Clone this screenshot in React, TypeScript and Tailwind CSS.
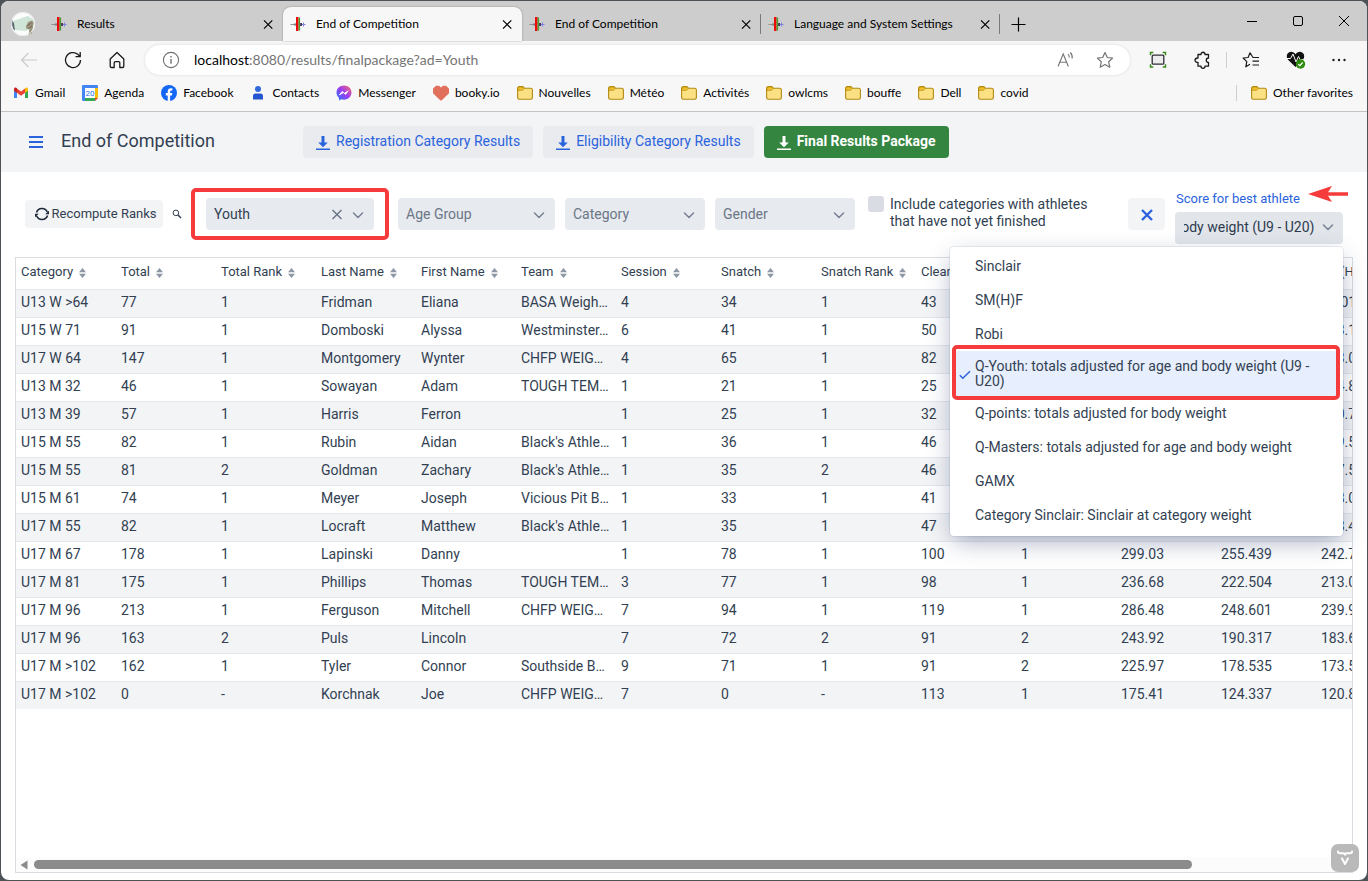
import { useLayoutEffect, useRef, type ReactNode } from 'react';

function BarbellIcon() {
  return (
    <svg viewBox="0 0 16 16" className="h-4 w-4 shrink-0" aria-hidden="true">
      <path d="M.5 8.500H6" stroke="#8d8d8d" strokeWidth="1" />
      <path d="M5 7v3" stroke="#777" strokeWidth="1" />
      <rect x="6" y="1" width="2.500" height="14" fill="#f00808" />
      <rect x="8.500" y="1.500" width="1.600" height="13" fill="#4d9a35" />
      <rect x="10.100" y="7" width="1.900" height="3" fill="#3f3a56" />
      <path d="M12 8.500h3.500M13.500 6.500v4" stroke="#8080e0" strokeWidth="1" />
    </svg>
  );
}

function CloseIcon({ className }: { className: string }) {
  return (
    <svg viewBox="0 0 16 16" className={className} fill="none" stroke="currentColor" aria-hidden="true">
      <path d="M4 4.300l8.300 8.300M12.300 4.300L4 12.600" strokeWidth="1.200" />
    </svg>
  );
}

function Tab({ title, active, divider }: { title: string; active?: boolean; divider?: boolean }) {
  return (
    <div
      className={
        active
          ? 'flex h-[34px] w-[239px] items-center gap-[10px] rounded-t-lg bg-[#f7f7f7] px-[7px] shadow-[0_0_2px_rgba(0,0,0,0.35)]'
          : divider
            ? 'flex h-[34px] w-[239px] items-center gap-[10px] bg-[linear-gradient(#7a7a7a,#7a7a7a)] bg-[length:1px_20px] bg-[position:right_center] bg-no-repeat px-[7px]'
            : 'flex h-[34px] w-[239px] items-center gap-[10px] px-[7px]'
      }
    >
      <BarbellIcon />
      <span className="flex-1 truncate">{title}</span>
      <button type="button" aria-label={'Close ' + title} className="h-4 w-4">
        <CloseIcon className="h-4 w-4" />
      </button>
    </div>
  );
}

function FolderIcon() {
  return (
    <svg viewBox="0 0 16 16" className="h-4 w-4 shrink-0" aria-hidden="true">
      <path d="M.6 3.2a1.6 1.6 0 0 1 1.6-1.6h3.2c.8 0 1 .3 1.4.8l.7.9h6.300a1.600 1.600 0 0 1 1.600 1.600v7.700a1.700 1.700 0 0 1-1.700 1.700H2.300A1.700 1.700 0 0 1 .6 12.600z" fill="#fbe084" stroke="#b28a10" strokeWidth="1.1" />
      <path d="M1 3.200C1 2.400 1.600 2 2.300 2h3c.6 0 .8.2 1.200.7l.6.8-1 1.300c-.3.4-.6.500-1.100.500H1z" fill="#efc02c" stroke="#b28a10" strokeWidth=".7" />
    </svg>
  );
}

function GmailIcon() {
  return (
    <svg viewBox="0 0 16 16" className="h-4 w-4 shrink-0" aria-hidden="true">
      <path d="M1 4.500v8.500h3V7.500z" fill="#4285f4" />
      <path d="M15 4.500v8.500h-3V7.500z" fill="#34a853" />
      <path d="M4 3.400v4.300l4 3 4-3V3.400l-4 3z" fill="#ea4335" />
      <path d="M1 4.200v1.500l3 2.200V3.200C2.500 2 1 2.800 1 4.200z" fill="#c5221f" />
      <path d="M15 4.200v1.500l-3 2.200V3.200c1.500-1.200 3-.4 3 1z" fill="#fbbc04" />
    </svg>
  );
}

function AgendaIcon() {
  return (
    <svg viewBox="0 0 16 16" className="h-4 w-4 shrink-0" aria-hidden="true">
      <path d="M0 1.200C0 .5.5 0 1.200 0h13.600c.7 0 1.200.5 1.200 1.200V12l-4 4H1.200C.5 16 0 15.500 0 14.800z" fill="#4285f4" />
      <rect x="13" y="3" width="3" height="10" fill="#fbbc04" />
      <rect x="3" y="13" width="10" height="3" fill="#34a853" />
      <path d="M13 13h3l-3 3z" fill="#ea4335" />
      <rect x="3" y="3" width="10" height="10" fill="#fff" />
      <text x="8" y="10.800" fontSize="8" textAnchor="middle" fill="#1a73e8" fontFamily="Roboto, sans-serif">20</text>
    </svg>
  );
}

function FacebookIcon() {
  return (
    <svg viewBox="0 0 16 16" className="h-4 w-4 shrink-0" aria-hidden="true">
      <circle cx="8" cy="8" r="8" fill="#1466f4" />
      <path d="M6.700 16v-5.500H4.800V8h1.900V6.800c0-2.500 1.200-3.600 3.400-3.600.4 0 1 .1 1.300.2v2.100h-.8c-1.100 0-1.500.5-1.500 1.500v1h2.200l-.4 2.500H9.100V16z" fill="#fff" />
    </svg>
  );
}

function ContactsIcon() {
  return (
    <svg viewBox="0 0 16 16" className="h-4 w-4 shrink-0" aria-hidden="true">
      <circle cx="8" cy="4" r="3" fill="#2f67dc" />
      <path d="M3 14.500V11a2.500 2.500 0 0 1 2.500-2.500h5A2.500 2.500 0 0 1 13 11v3.500z" fill="#2456cf" />
    </svg>
  );
}

function MessengerIcon() {
  return (
    <svg viewBox="0 0 16 16" className="h-4 w-4 shrink-0" aria-hidden="true">
      <defs>
        <linearGradient id="messenger" x1="0" y1="1" x2="1" y2="0">
          <stop offset="0" stopColor="#1c7bff" />
          <stop offset=".5" stopColor="#9a3cf6" />
          <stop offset="1" stopColor="#ff6a66" />
        </linearGradient>
      </defs>
      <path d="M8 .5C3.700.5.5 3.600.5 7.600c0 2.200.9 4.100 2.500 5.400v2.500l2.300-1.200c.9.2 1.700.4 2.700.4 4.300 0 7.500-3.100 7.500-7.100S12.300.5 8 .5z" fill="url(#messenger)" />
      <path d="M3.500 9.900l2.700-3.500 2.200 1.900 3.800-2.500-2.600 3.600-2.300-1.800z" fill="#fff" stroke="#fff" strokeWidth=".8" strokeLinejoin="round" />
    </svg>
  );
}

function HeartIcon() {
  return (
    <svg viewBox="0 0 16 16" className="h-4 w-4 shrink-0" aria-hidden="true">
      <path d="M0 3.500L3 .8h3l2 1.700 2-1.700h3l3 2.700v4.800L8.500 15.500h-1L0 8.300z" fill="#e0705c" />
    </svg>
  );
}

const bookmarks: { label: string; icon: ReactNode }[] = [
  { label: 'Gmail', icon: <GmailIcon /> },
  { label: 'Agenda', icon: <AgendaIcon /> },
  { label: 'Facebook', icon: <FacebookIcon /> },
  { label: 'Contacts', icon: <ContactsIcon /> },
  { label: 'Messenger', icon: <MessengerIcon /> },
  { label: 'booky.io', icon: <HeartIcon /> },
  { label: 'Nouvelles', icon: <FolderIcon /> },
  { label: 'Météo', icon: <FolderIcon /> },
  { label: 'Activités', icon: <FolderIcon /> },
  { label: 'owlcms', icon: <FolderIcon /> },
  { label: 'bouffe', icon: <FolderIcon /> },
  { label: 'Dell', icon: <FolderIcon /> },
  { label: 'covid', icon: <FolderIcon /> },
];

function BrowserChrome() {
  return (
    <div className="font-['Lato','Noto_Sans',sans-serif] text-xs text-black">
      <div className="flex h-10 items-end bg-[#cdcdcd]">
        <svg viewBox="0 0 24 24" className="mr-[9px] mb-[5px] ml-[10px] h-6 w-6" aria-hidden="true">
          <circle cx="12" cy="12" r="12" fill="#fbfdfc" />
          <path d="M2 9l15-5 6 4-1 8-7 3-11-1z" fill="#cfe5d8" />
          <path d="M1 7.500l2 4 1 7-1.500-1L0 12z" fill="#5b6570" />
          <path d="M17 10l4-1.500 1.800 2L21 21l-3.500 2 1-6.500-3 .5-.5-2z" fill="#9b937b" />
          <path d="M15.500 14l5-3M17 17l4-3" stroke="#5e5646" strokeWidth=".7" />
          <circle cx="12" cy="12" r="11.500" fill="none" stroke="#e8ecea" />
        </svg>
        <div className="flex">
          <Tab title="Results" />
          <Tab title="End of Competition" active />
          <Tab title="End of Competition" divider />
          <Tab title="Language and System Settings" divider />
        </div>
        <button type="button" aria-label="New tab" className="ml-[10px] flex h-[34px] w-4 items-center">
          <svg viewBox="0 0 16 16" className="h-4 w-4" stroke="currentColor" strokeWidth="1.200">
            <path d="M8.500 1.500v14M1.500 8.500h14" />
          </svg>
        </button>
        <div className="ml-auto flex h-10 self-start">
          <button type="button" aria-label="Minimize" className="flex w-[46px] items-center justify-center">
            <svg viewBox="0 0 12 12" className="h-3 w-3" stroke="currentColor"><path d="M1 6.500h10" /></svg>
          </button>
          <button type="button" aria-label="Maximize" className="flex w-[46px] items-center justify-center">
            <svg viewBox="0 0 12 12" className="h-3 w-3" fill="none" stroke="currentColor"><rect x="1.500" y="1.500" width="9" height="9" rx="1.500" /></svg>
          </button>
          <button type="button" aria-label="Close window" className="flex w-[46px] items-center justify-center">
            <svg viewBox="0 0 12 12" className="h-3 w-3" stroke="currentColor"><path d="M1 1l10 10M11 1L1 11" /></svg>
          </button>
        </div>
      </div>

      <div className="border-b border-[#c3c3c3] bg-[#f7f7f7] pt-1">
        <div className="flex h-[30px] items-center pl-[6px]">
          <button type="button" aria-label="Back" className="flex w-11 justify-center text-[#c9c9c9]">
            <svg viewBox="0 0 18 18" className="h-[18px] w-[18px]" fill="none" stroke="currentColor" strokeWidth="1.100">
              <path d="M17 9H1.500M8.500 2L1.500 9l7 7" />
            </svg>
          </button>
          <button type="button" aria-label="Refresh" className="flex w-11 justify-center text-[#1b1b1b]">
            <svg viewBox="0 0 18 18" className="h-[18px] w-[18px]" fill="none" stroke="currentColor" strokeWidth="1.300">
              <path d="M16.500 9A7.500 7.500 0 1 1 13.800 3.300L16 5.500M16.200 1v4.700h-4.700" />
            </svg>
          </button>
          <button type="button" aria-label="Home" className="flex w-11 justify-center text-[#1b1b1b]">
            <svg viewBox="0 0 18 18" className="h-[18px] w-[18px]" fill="none" stroke="currentColor" strokeWidth="1.300" strokeLinejoin="round">
              <path d="M2.200 8L9 1.500 15.800 8v7.300c0 .7-.5 1.200-1.200 1.200h-2.800v-4.700c0-.7-.5-1.200-1.200-1.200H7.400c-.7 0-1.200.5-1.200 1.200v4.700H3.400c-.7 0-1.200-.5-1.200-1.200z" />
            </svg>
          </button>
          <div className="ml-[6px] flex h-[30px] flex-1 items-center rounded-full bg-white pr-4 pl-[17px] shadow-[0_0_3px_rgba(0,0,0,0.12)]">
            <svg viewBox="0 0 18 18" className="h-[18px] w-[18px]" fill="none" stroke="#6f6f6f" strokeWidth="1.100" aria-hidden="true">
              <circle cx="9" cy="9" r="7.600" />
              <path d="M9 8v4.800M9 5v1.500" strokeWidth="1.400" />
            </svg>
            <a href="#address" className="ml-[14px] flex-1 text-sm leading-5 whitespace-nowrap text-[#757575]">
              <span className="text-black">localhost</span>:8080/results/finalpackage?ad=Youth
            </a>
            <button type="button" aria-label="Read aloud" className="text-[#757575]">
              <svg viewBox="0 0 18 18" className="h-[18px] w-[18px]" fill="none" stroke="currentColor" strokeWidth="1.100">
                <path d="M2 15.500L7.200 3l5.200 12.500M3.800 11.200h6.900M12 3.200c1 .9 1.400 2 1.200 3.400M14.200 1.500c1.900 1.700 2.400 3.500 2 6" />
              </svg>
            </button>
            <button type="button" aria-label="Add to favorites" className="ml-[22px] text-[#757575]">
              <svg viewBox="0 0 18 18" className="h-[18px] w-[18px]" fill="none" stroke="currentColor" strokeWidth="1.200" strokeLinejoin="round">
                <path d="M9 1.500l2.300 5 5.300.6-3.900 3.700 1.100 5.400L9 13.500l-4.800 2.700 1.100-5.400L1.400 7.100l5.300-.6z" />
              </svg>
            </button>
          </div>
          <div className="flex w-[237px] items-center">
            <button type="button" aria-label="Screenshot" className="ml-[19px]">
              <svg viewBox="0 0 18 18" className="h-[18px] w-[18px]" fill="none">
                <rect x="3.200" y="4.200" width="11.600" height="9" rx="1" stroke="#2d2d36" strokeWidth="1.300" fill="#ececec" />
                <path d="M1.500 4.300V1.500h2.800M13.700 1.500h2.800v2.800M16.500 13.200V16h-2.800M4.300 16H1.500v-2.800" stroke="#3c8a1e" strokeWidth="1.500" />
              </svg>
            </button>
            <button type="button" aria-label="Extensions" className="ml-[26px] text-[#1b1b1b]">
              <svg viewBox="0 0 18 18" className="h-[18px] w-[18px]" fill="none" stroke="currentColor" strokeWidth="1.300" strokeLinejoin="round">
                <path d="M5 3.500h3c0-3 4-3 4 0h3.500V7c-3 .2-3 4.300 0 4.500v3.700H12c0 2.800-4 2.800-4 0H5v-3.700c-4 0-4-4.500 0-4.500z" />
              </svg>
            </button>
            <span className="ml-[15px] h-4 w-px bg-[#cfcfcf]" />
            <button type="button" aria-label="Favorites" className="ml-[15px] text-[#1b1b1b]">
              <svg viewBox="0 0 18 18" className="h-[18px] w-[18px]" fill="none" stroke="currentColor" strokeWidth="1.200" strokeLinejoin="round">
                <path d="M17 6.500h-6L8 1.800 6.100 6.500l-5 .5 3.700 3.600-1 5.200L8 13.300M10.500 10.200H17M10.500 14H17" />
              </svg>
            </button>
            <button type="button" aria-label="Browser essentials" className="ml-[26px]">
              <svg viewBox="0 0 20 20" className="h-5 w-5">
                <path d="M9.500 17L2 9.800C-.5 6.500 1 2 5 1.800c2 0 3.500 1 4.500 2.500 1-1.500 2.500-2.500 4.500-2.500 4 .2 5.500 4.700 3 8z" fill="#111" />
                <path d="M1 8.500h3.500L7 4l3 8 2.500-5.500 1.500 3h3" fill="none" stroke="#f7f7f7" strokeWidth="1" />
                <circle cx="14.500" cy="14" r="4.700" fill="#2e8b0e" />
                <path d="M12.300 14.200l1.600 1.500 2.800-3.200" fill="none" stroke="#fff" strokeWidth="1.200" />
              </svg>
            </button>
            <button type="button" aria-label="More" className="ml-[24px]">
              <svg viewBox="0 0 18 18" className="h-[18px] w-[18px]" fill="#1b1b1b">
                <circle cx="3.500" cy="9" r="1.200" /><circle cx="9" cy="9" r="1.200" /><circle cx="14.500" cy="9" r="1.200" />
              </svg>
            </button>
          </div>
        </div>
        <nav className="flex h-9 items-center gap-[17px] pr-[14px] pl-3">
          {bookmarks.map((b) => (
            <a key={b.label} href={'#' + b.label} className="flex items-center gap-[6px] whitespace-nowrap">
              {b.icon}
              {b.label}
            </a>
          ))}
          <a href="#other" className="ml-auto flex items-center gap-[6px] border-l border-[#cfcfcf] pl-[14px] whitespace-nowrap">
            <FolderIcon />
            Other favorites
          </a>
        </nav>
      </div>
    </div>
  );
}

function DownloadIcon() {
  return (
    <svg viewBox="0 0 14 16" className="mt-[3px] h-4 w-[14px]" fill="currentColor" aria-hidden="true">
      <path d="M5.500 1h3v6.500h3.300L7 12.200 2.200 7.500h3.300zM0 13.500h14V15H0z" />
    </svg>
  );
}

function Chevron() {
  return (
    <svg viewBox="0 0 12 12" className="h-3 w-3" fill="none" stroke="#768192" strokeWidth="1.500" strokeLinecap="round" strokeLinejoin="round" aria-hidden="true">
      <path d="M1.500 4L6 8.500 10.500 4" />
    </svg>
  );
}

function FilterSelect({ label }: { label: string }) {
  return (
    <div className="relative h-8 w-[140px] first:w-[157px]">
      <select aria-label={label} defaultValue="" className="h-8 w-full appearance-none rounded-[4px] bg-[#e7eaee] pr-8 pl-2 text-[#6b7687]">
        <option value="">{label}</option>
      </select>
      <span className="pointer-events-none absolute top-[11px] right-[10px]"><Chevron /></span>
    </div>
  );
}

const scoreOptions = [
  'Sinclair',
  'SM(H)F',
  'Robi',
  'Q-Youth: totals adjusted for age and body weight (U9 - U20)',
  'Q-points: totals adjusted for body weight',
  'Q-Masters: totals adjusted for age and body weight',
  'GAMX',
  'Category Sinclair: Sinclair at category weight',
];
const selectedScore = scoreOptions[3];

function ScorePicker() {
  const input = useRef<HTMLInputElement>(null);
  useLayoutEffect(() => {
    const el = input.current;
    if (el) el.scrollLeft = el.scrollWidth;
  }, []);

  return (
    <div className="relative w-[168px] pt-[6px]">
      <div className="flex h-[22px] items-start">
        <label htmlFor="score" className="pl-px text-[13px] leading-[18px] whitespace-nowrap text-[#2b63dd]">Score for best athlete</label>
        <svg viewBox="0 0 40 16" className="absolute top-[2px] left-[133px] h-4 w-10" fill="#f53b3b" aria-hidden="true">
          <path d="M0 8L24 0l-4 6.200h20v3.600H20L24 16z" />
        </svg>
      </div>
      <div className="flex h-8 items-center rounded-[4px] bg-[#e2e6eb] pr-[9px] pb-px pl-[9px]">
        <input
          id="score"
          ref={input}
          role="combobox"
          aria-expanded="true"
          aria-controls="score-options"
          readOnly
          value={selectedScore}
          className="w-[130px] bg-transparent text-[#2e3b4f] outline-none"
        />
        <button type="button" aria-label="Toggle score list" className="ml-auto"><Chevron /></button>
      </div>
      <ul
        id="score-options"
        role="listbox"
        className="absolute top-[63px] right-0 z-10 w-[393px] rounded-[4px] bg-white px-1 pt-[2px] pb-1 shadow-[0_0_0_1px_rgba(40,55,90,0.08),0_8px_24px_-4px_rgba(30,50,100,0.42)]"
      >
        {scoreOptions.map((option) =>
          option === selectedScore ? (
            <li key={option} role="option" aria-selected="true" className="relative flex h-[45px] items-center rounded-[4px] bg-[#e7eefd] px-[21px] pt-px leading-[15px]">
              <svg viewBox="0 0 12 12" className="absolute top-[18px] left-[5px] h-3 w-3" fill="none" stroke="#2b63dd" strokeWidth="1.500" aria-hidden="true">
                <path d="M.8 6.300l3 3L11 2.300" />
              </svg>
              {option}
              <span className="pointer-events-none absolute -top-[6px] -right-px -bottom-[4px] -left-[2px] rounded-[5px] border-4 border-[#f53b3b]" />
            </li>
          ) : (
            <li key={option} role="option" aria-selected="false" className="flex h-[34px] items-center px-[21px]">
              {option}
            </li>
          ),
        )}
      </ul>
    </div>
  );
}

const columns = ['Category', 'Total', 'Total Rank', 'Last Name', 'First Name', 'Team', 'Session', 'Snatch', 'Snatch Rank', 'Clean & Jerk', 'C&J Rank', 'Robi', 'Sinclair', 'SM(H)F'];

const rows: string[][] = [
  ['U13 W >64', '77', '1', 'Fridman', 'Eliana', 'BASA Weigh…', '4', '34', '1', '43', '', '', '', '88.01'],
  ['U15 W 71', '91', '1', 'Domboski', 'Alyssa', 'Westminster…', '6', '41', '1', '50', '', '', '', '113.1'],
  ['U17 W 64', '147', '1', 'Montgomery', 'Wynter', 'CHFP WEIG…', '4', '65', '1', '82', '', '', '', '193.0'],
  ['U13 M 32', '46', '1', 'Sowayan', 'Adam', 'TOUGH TEM…', '1', '21', '1', '25', '', '', '', '114.8'],
  ['U13 M 39', '57', '1', 'Harris', 'Ferron', '', '1', '25', '1', '32', '', '', '', '120.7'],
  ['U15 M 55', '82', '1', 'Rubin', 'Aidan', "Black's Athle…", '1', '36', '1', '46', '', '', '', '129.5'],
  ['U15 M 55', '81', '2', 'Goldman', 'Zachary', "Black's Athle…", '1', '35', '2', '46', '', '', '', '127.5'],
  ['U15 M 61', '74', '1', 'Meyer', 'Joseph', 'Vicious Pit B…', '1', '33', '1', '41', '', '', '', '108.0'],
  ['U17 M 55', '82', '1', 'Locraft', 'Matthew', "Black's Athle…", '1', '35', '1', '47', '', '', '', '128.4'],
  ['U17 M 67', '178', '1', 'Lapinski', 'Danny', '', '1', '78', '1', '100', '1', '299.03', '255.439', '242.7'],
  ['U17 M 81', '175', '1', 'Phillips', 'Thomas', 'TOUGH TEM…', '3', '77', '1', '98', '1', '236.68', '222.504', '213.0'],
  ['U17 M 96', '213', '1', 'Ferguson', 'Mitchell', 'CHFP WEIG…', '7', '94', '1', '119', '1', '286.48', '248.601', '239.9'],
  ['U17 M 96', '163', '2', 'Puls', 'Lincoln', '', '7', '72', '2', '91', '2', '243.92', '190.317', '183.6'],
  ['U17 M >102', '162', '1', 'Tyler', 'Connor', 'Southside B…', '9', '71', '1', '91', '2', '225.97', '178.535', '173.5'],
  ['U17 M >102', '0', '-', 'Korchnak', 'Joe', 'CHFP WEIG…', '7', '0', '-', '113', '1', '175.41', '124.337', '120.8'],
];

function ResultsGrid() {
  return (
    <div className="mx-[14px] mb-[7px] flex flex-1 flex-col overflow-hidden border border-[#d9dce1]">
      <div className="flex-1 overflow-hidden">
        <table className="w-[1400px] table-fixed border-collapse text-left">
          <thead>
            <tr className="h-[31px] text-[13px]">
              {columns.map((c) => (
                <th key={c} className="px-[5px] pb-px font-normal whitespace-nowrap">
                  <span className="inline-flex items-center gap-[6px]">
                    {c}
                    <svg viewBox="0 0 7 10" className="mt-px h-[10px] w-[7px]" fill="#8d96a5" aria-hidden="true">
                      <path d="M3.500 0L7 4.300H0zM0 5.700h7L3.500 10z" />
                    </svg>
                  </span>
                </th>
              ))}
            </tr>
          </thead>
          <tbody>
            {rows.map((r, i) => (
              <tr key={i} className="h-7 border-t border-[#e4e7eb] odd:bg-[#f3f4f6]">
                {r.map((cell, j) => (
                  <td key={j} className="px-[5px] pb-[2px] leading-5 whitespace-nowrap">{cell}</td>
                ))}
              </tr>
            ))}
          </tbody>
        </table>
      </div>
      <div className="flex h-[15px] items-center bg-[#fcfcfc]" aria-hidden="true">
        <svg viewBox="0 0 8 10" className="mr-[6px] ml-1 h-[10px] w-2" fill="#8b8b8b"><path d="M7.500.5v9L.5 5z" /></svg>
        <div className="mr-[160px] h-[9px] flex-1 rounded-full bg-[#8b8b8b]" />
      </div>
    </div>
  );
}

export default function App() {
  return (
    <div className="flex min-h-screen bg-[#4c5256] p-px">
      <div className="relative flex min-w-0 flex-1 flex-col overflow-hidden rounded-lg bg-white">
        <BrowserChrome />

        <main className="flex flex-1 flex-col font-['Roboto',sans-serif] text-sm text-[#323f52]">
          <header className="flex h-[60px] items-center bg-[#f3f4f6] pl-7">
            <button type="button" aria-label="Menu">
              <svg viewBox="0 0 14 12" className="h-3 w-[14px]" fill="#2b63dd"><path d="M0 0h14v2H0zM0 5h14v2H0zM0 10h14v2H0z" /></svg>
            </button>
            <h1 className="ml-[18px] w-[242px] pb-[2px] text-lg leading-6">End of Competition</h1>
            <div className="flex gap-[10px]">
              <button type="button" className="flex h-8 items-center gap-[6px] rounded-[4px] bg-[#e9ebef] px-[13px] pb-[2px] text-[#2b63dd]">
                <DownloadIcon />
                Registration Category Results
              </button>
              <button type="button" className="flex h-8 items-center gap-[6px] rounded-[4px] bg-[#e9ebef] px-[13px] pb-[2px] text-[#2b63dd]">
                <DownloadIcon />
                Eligibility Category Results
              </button>
              <button type="button" className="flex h-8 items-center gap-[6px] rounded-[4px] bg-[#338540] px-[13px] pb-[2px] font-bold text-white">
                <DownloadIcon />
                Final Results Package
              </button>
            </div>
          </header>

          <section className="flex h-[85px] items-center px-6 pb-[2px]">
            <button type="button" className="flex h-7 w-[138px] items-center justify-center gap-[3px] rounded-[4px] bg-[#f3f4f6] pt-px pl-[3px] text-[13px] whitespace-nowrap">
              <svg viewBox="0 0 14 14" className="h-[14px] w-[14px]" fill="none" stroke="#1e2a3a" strokeWidth="1.600" aria-hidden="true">
                <path d="M1.500 5.500a5.800 5.800 0 0 1 10.800-.5M12.500 8.500A5.800 5.800 0 0 1 1.700 9" />
                <path d="M14 3.800v3.400h-3.800zM0 10.200V6.800h3.800z" fill="#1e2a3a" stroke="none" />
              </svg>
              Recompute Ranks
            </button>
            <svg viewBox="0 0 10 10" className="mx-[9px] h-[10px] w-[10px]" fill="none" stroke="#323f52" aria-hidden="true">
              <circle cx="3.900" cy="3.900" r="2.800" />
              <path d="M6 6l3 3" strokeWidth="1.500" />
            </svg>
            <div className="mr-[9px] w-[198px] rounded-[5px] border-4 border-[#f53b3b] px-[11px] py-[6px]">
              <div className="relative h-8">
                <select aria-label="Age division" className="h-8 w-full appearance-none rounded-[4px] bg-[#e7eaee] pr-12 pl-2">
                  <option>Youth</option>
                </select>
                <button type="button" aria-label="Clear age division" className="absolute top-2 right-[29px] h-4 w-4 text-[#6b7687]">
                  <svg viewBox="0 0 16 16" className="h-4 w-4" fill="none" stroke="currentColor" strokeWidth="1.500"><path d="M3.500 4l9 9M12.500 4l-9 9" /></svg>
                </button>
                <span className="pointer-events-none absolute top-[11px] right-[10px]"><Chevron /></span>
              </div>
            </div>
            <div className="flex gap-[10px]">
              <FilterSelect label="Age Group" />
              <FilterSelect label="Category" />
              <FilterSelect label="Gender" />
            </div>
            <label className="ml-[13px] flex w-[230px] items-start gap-[6px] pb-px leading-[17px]">
              <input type="checkbox" className="h-4 w-4 shrink-0 appearance-none rounded-[3px] bg-[#d9dde3]" />
              Include categories with athletes that have not yet finished
            </label>
            <button type="button" aria-label="Clear filters" className="mr-[10px] ml-auto flex h-8 w-[37px] items-center justify-center rounded-[4px] bg-[#f3f4f6]">
              <svg viewBox="0 0 12 12" className="mt-[2px] h-3 w-3" stroke="#2b63dd" strokeWidth="2.400"><path d="M1 1l10 10M11 1L1 11" /></svg>
            </button>
            <ScorePicker />
          </section>

          <ResultsGrid />
        </main>

        <button type="button" aria-label="Development tools" className="absolute right-[8px] bottom-[8px] flex h-7 w-7 items-center justify-center rounded-[7px] bg-[#b9b9b9]">
          <svg viewBox="0 0 16 16" className="h-4 w-4" fill="none" stroke="#fff" strokeWidth="2" strokeLinecap="round" strokeLinejoin="round">
            <path d="M1 1.500c0 1.500.6 1.800 1.800 1.800h3.400c1 0 1.800.4 1.800 1.400 0-1 .8-1.400 1.800-1.400h3.400c1.200 0 1.800-.3 1.800-1.800M5 8.500l3 5.500 3-5.500" />
          </svg>
        </button>
      </div>
    </div>
  );
}
